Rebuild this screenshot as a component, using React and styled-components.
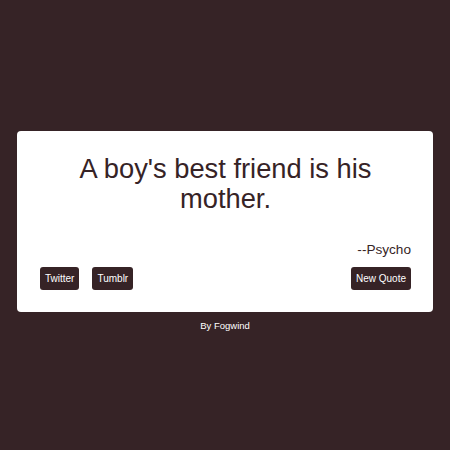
import React from "react";
import styled, { createGlobalStyle } from "styled-components";

const Global = createGlobalStyle`
  html, body { margin: 0; padding: 0; background: #362326; }
  body { font-family: "Liberation Sans", Arial, sans-serif; }
`;

const Page = styled.div`
  min-height: 450px;
  padding: 131px 17px 0;
  box-sizing: border-box;
  display: flex;
  flex-direction: column;
  align-items: stretch;
`;

const Card = styled.div`
  background: #ffffff;
  border-radius: 4px;
  height: 181px;
  box-sizing: border-box;
  padding: 23px 22px 22px 23px;
  display: flex;
  flex-direction: column;
`;

const Quote = styled.p`
  margin: 0;
  font-size: 27.3px;
  line-height: 30px;
  text-align: center;
  color: #362326;
`;

const Author = styled.p`
  margin: 28px 0 0;
  font-size: 13.6px;
  line-height: 16px;
  text-align: right;
  color: #362326;
`;

const Actions = styled.div`
  margin-top: 9px;
  display: flex;
  align-items: center;
  gap: 13px;
`;

const Button = styled.button`
  height: 23px;
  padding: 0 5px;
  border: none;
  border-radius: 3px;
  background: #362326;
  color: #ffffff;
  font-family: "Liberation Sans", Arial, sans-serif;
  font-size: 10px;
  display: inline-flex;
  align-items: center;
  margin-left: ${(p) => (p.$push ? "auto" : "0")};
  cursor: pointer;
`;

const Footer = styled.p`
  margin: 8px 0 0;
  text-align: center;
  color: #ffffff;
  font-size: 9.5px;
  line-height: 11px;
`;

export default function App() {
  return (
    <>
      <Global />
      <Page>
        <Card>
          <Quote>A boy's best friend is his mother.</Quote>
          <Author>--Psycho</Author>
          <Actions>
            <Button>Twitter</Button>
            <Button>Tumblr</Button>
            <Button $push>New Quote</Button>
          </Actions>
        </Card>
        <Footer>By Fogwind</Footer>
      </Page>
    </>
  );
}
